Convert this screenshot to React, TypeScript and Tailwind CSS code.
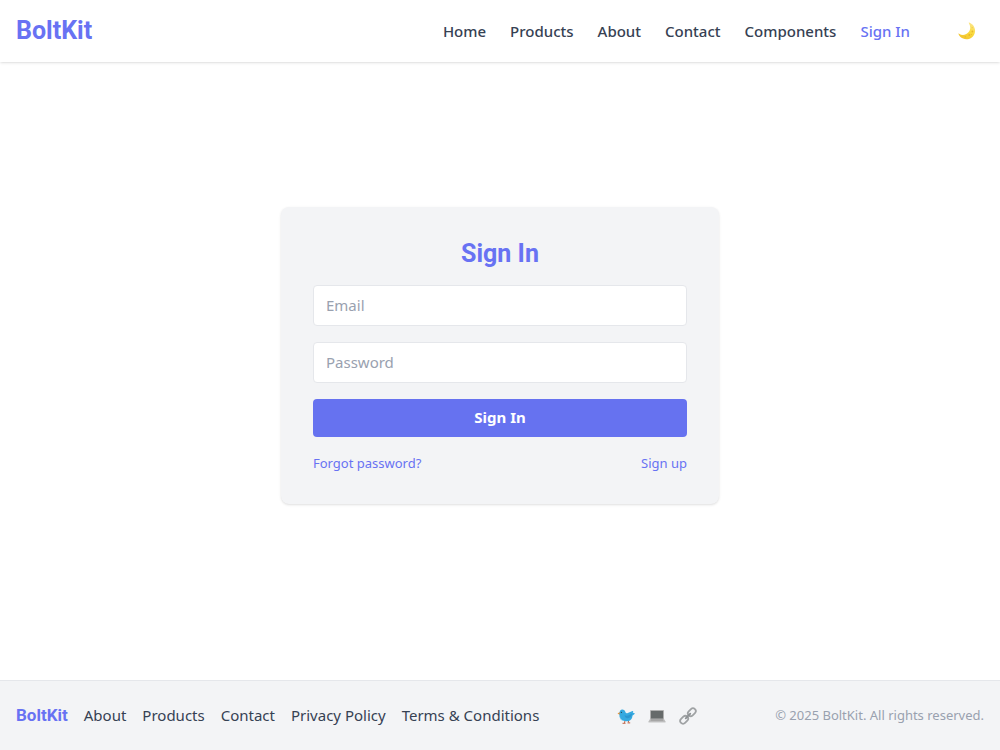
import { useState } from "react"
import type React from "react"

const navLinks = ["Home", "Products", "About", "Contact", "Components"]
const footerLinks = ["About", "Products", "Contact", "Privacy Policy", "Terms & Conditions"]

const MoonIcon = () => (
  <svg viewBox="0 0 18 18" className="size-[18px]" aria-hidden="true">
    <defs>
      <linearGradient id="moon" x1="0.9" y1="0.1" x2="0.4" y2="1">
        <stop offset="0" stopColor="#fbe58a" />
        <stop offset="0.5" stopColor="#fada3c" />
        <stop offset="1" stopColor="#f2c531" />
      </linearGradient>
    </defs>
    <path
      d="M11.3.6c4.6 1.9 6.8 6.6 5.3 10.8-1.6 4.7-6.9 7.1-11.5 5.2-2.3-.9-3.8-2.5-4.6-4.5-.2-.5.2-.7.6-.4 2.8 1.9 6.6 1.5 9.1-1.1 2.5-2.6 2.7-6.2.7-9.3-.3-.5-.1-.9.4-.7z"
      fill="url(#moon)"
    />
    <circle cx="14.4" cy="9.5" r=".9" fill="#e8b72b" />
    <circle cx="11.3" cy="13" r="1" fill="#e8b72b" />
    <circle cx="14.2" cy="5.6" r=".6" fill="#eec747" />
    <circle cx="7.3" cy="14.8" r=".7" fill="#e8b72b" />
    <circle cx="13.5" cy="12.6" r=".5" fill="#e8b72b" />
  </svg>
)

const BirdIcon = () => (
  <svg viewBox="0 0 18 18" className="size-[18px]" aria-hidden="true">
    <path d="M8 13.5 7.5 16M11 13l.8 2.5M5.5 16.3h3M10.500 15.9h2.7" stroke="#c0664a" strokeWidth="1" fill="none" />
    <path d="M.5 6.6 3 5v3z" fill="#f0912f" />
    <path
      d="M5.2 2.5C7 2.5 8.2 3.8 8.5 5.3c.3 1 1.300 1.200 2.300.7L15.500 4c.5-.2.9.2.7.7l-.5 1.100 1.500.2c.5.1.6.6.3.9L15.400 8.700c.1 3.300-2.500 5.600-6 5.600-4.200 0-7-2.300-7-6.200 0-.8.2-1.400.2-2.200 0-1.900.9-3.400 2.600-3.400z"
      fill="#35a9e0"
    />
    <path d="M7.500 8.300c2.400.9 5 .1 7.500-1.700-.3 2.900-2.100 4.900-4.400 4.700-1.600-.1-2.600-1.200-3.100-3z" fill="#2b96d0" />
    <path d="M3 9c.1 2.500 1.600 4.200 4.200 4.900-2.900.2-5-1.900-4.200-4.900z" fill="#7ccbed" />
    <circle cx="4.4" cy="5.3" r=".65" fill="#263f4e" />
  </svg>
)

const LaptopIcon = () => (
  <svg viewBox="0 0 18 18" className="size-[18px]" aria-hidden="true">
    <rect x="2" y="3" width="14" height="9.5" rx=".8" fill="#b0b0b0" />
    <rect x="3" y="4" width="12" height="7.5" fill="#666a6a" />
    <path d="M2 12h14l1.5 2.5H.5z" fill="#bcbcbc" />
    <path d="M3 12.6h12l.4.8H2.6z" fill="#8f8f8f" />
    <path d="M.5 14.5h17v.8H.5z" fill="#a3a3a3" />
  </svg>
)

const LinkIcon = () => (
  <svg viewBox="0 0 18 18" className="size-[18px]" aria-hidden="true" fill="none">
    <g transform="rotate(-45 9 9)" stroke="#9fa2a4" strokeWidth="1.8">
      <rect x="-.8" y="6.2" width="8.8" height="5.6" rx="2.8" />
      <rect x="10" y="6.2" width="8.8" height="5.6" rx="2.8" />
      <path d="M5.8 9h6.4" strokeLinecap="round" stroke="#8d9194" />
    </g>
  </svg>
)

const socials = [
  { label: "Twitter", Icon: BirdIcon },
  { label: "GitHub", Icon: LaptopIcon },
  { label: "Website", Icon: LinkIcon },
]

const Header = () => (
  <header className="flex h-[62px] items-center justify-between bg-white px-4 shadow">
    <a href="#" className="font-[Roboto] text-[25px] font-bold text-[#6872f3]">
      BoltKit
    </a>
    <div className="flex items-center gap-10">
      <nav className="flex items-center gap-6 text-[15px] font-medium text-gray-700">
        {navLinks.map((link) => (
          <a key={link} href="#" className="hover:text-[#6872f3]">
            {link}
          </a>
        ))}
        <a href="#" className="text-[#6872f3]">
          Sign In
        </a>
      </nav>
      <button type="button" aria-label="Toggle dark mode" className="p-2">
        <MoonIcon />
      </button>
    </div>
  </header>
)

const inputClass =
  "h-[41px] w-full rounded border border-gray-200 bg-white px-3 text-[15px] text-gray-700 placeholder:text-gray-400 focus:outline-none focus:ring-2 focus:ring-[#6672f0]"

const SignInForm = () => {
  const [email, setEmail] = useState("")
  const [password, setPassword] = useState("")

  const handleSubmit = (e: React.FormEvent) => {
    e.preventDefault()
  }

  return (
    <div className="w-full max-w-[438px] rounded-lg bg-gray-100 px-8 pt-8 pb-[31px] shadow-sm">
      <h2 className="mb-4 text-center font-[Roboto] text-[25px] leading-[30px] font-bold text-[#6872f3]">Sign In</h2>
      <form onSubmit={handleSubmit} className="flex flex-col gap-4">
        <input
          type="email"
          aria-label="Email"
          placeholder="Email"
          value={email}
          onChange={(e) => setEmail(e.target.value)}
          className={inputClass}
        />
        <input
          type="password"
          aria-label="Password"
          placeholder="Password"
          value={password}
          onChange={(e) => setPassword(e.target.value)}
          className={inputClass}
        />
        <button type="submit" className="h-[38px] w-full rounded bg-[#6672f0] text-[15px] font-bold text-white">
          Sign In
        </button>
      </form>
      <div className="mt-4 flex justify-between text-[13px] leading-5 text-[#6872f3]">
        <a href="#" className="hover:underline">
          Forgot password?
        </a>
        <a href="#" className="hover:underline">
          Sign up
        </a>
      </div>
    </div>
  )
}

const Footer = () => (
  <footer className="flex min-h-[70px] items-center justify-between border-t border-gray-200 bg-gray-100 px-4">
    <div className="flex items-center gap-4 text-[15px] text-gray-700">
      <a href="#" className="font-[Roboto] text-[17px] font-bold text-[#6872f3]">
        BoltKit
      </a>
      {footerLinks.map((link) => (
        <a key={link} href="#" className="hover:text-[#6872f3]">
          {link}
        </a>
      ))}
    </div>
    <div className="flex items-center gap-[13px]">
      {socials.map(({ label, Icon }) => (
        <a key={label} href="#" aria-label={label}>
          <Icon />
        </a>
      ))}
    </div>
    <p className="text-[13px] text-gray-400">© 2025 BoltKit. All rights reserved.</p>
  </footer>
)

const App = () => (
  <div className="flex min-h-screen flex-col bg-white font-['Noto_Sans',sans-serif]">
    <Header />
    <main className="flex flex-1 items-center justify-center px-4 pb-8">
      <SignInForm />
    </main>
    <Footer />
  </div>
)

export default App
